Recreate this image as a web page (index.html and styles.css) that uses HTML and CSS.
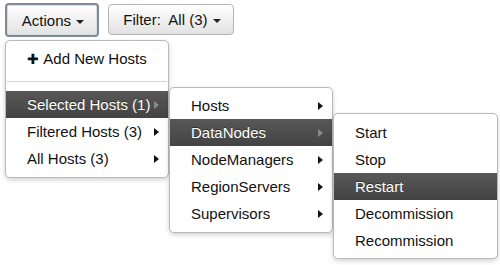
FILE: index.html
```html
<!DOCTYPE html>
<html lang="en">
<head>
  <meta charset="UTF-8">
  <title>Hosts Actions</title>
  <link rel="stylesheet" href="styles.css">
</head>
<body>
  <div class="toolbar">
    <button class="btn btn-actions">Actions <span class="caret"></span></button>
    <button class="btn btn-filter">Filter:&nbsp; All (3) <span class="caret"></span></button>
  </div>

  <ul class="menu menu-main">
    <li class="item"><span class="plus">&#10010;</span> Add New Hosts</li>
    <li class="divider"></li>
    <li class="item sub active">Selected Hosts (1)
      <ul class="menu menu-hosts">
        <li class="item sub">Hosts</li>
        <li class="item sub active">DataNodes
          <ul class="menu menu-ops">
            <li class="item">Start</li>
            <li class="item">Stop</li>
            <li class="item active">Restart</li>
            <li class="item">Decommission</li>
            <li class="item">Recommission</li>
          </ul>
        </li>
        <li class="item sub">NodeManagers</li>
        <li class="item sub">RegionServers</li>
        <li class="item sub">Supervisors</li>
      </ul>
    </li>
    <li class="item sub">Filtered Hosts (3)</li>
    <li class="item sub">All Hosts (3)</li>
  </ul>
</body>
</html>
```

FILE: styles.css
```css
body {
  margin: 0;
  font-family: "Liberation Sans", Arial, sans-serif;
  font-size: 15px;
  color: #111;
  background: #fff;
}
.toolbar {
  display: flex;
  align-items: flex-start;
  gap: 9px;
  padding: 3px 0 0 5px;
}
.btn {
  font-family: inherit;
  font-size: 15px;
  color: #111;
  background: linear-gradient(#ffffff, #e2e2e2);
  border: 1px solid #b4b4b4;
  border-radius: 4px;
  padding: 0;
  box-sizing: border-box;
}
.btn-actions {
  width: 94px;
  height: 34px;
  border: 2px solid #7f8b97;
  box-shadow: inset 0 0 0 1px #d8dde2;
  padding-left: 2px;
}
.btn-filter {
  width: 126px;
  height: 31px;
  margin-top: 1px;
  padding-left: 2px;
}
.caret {
  display: inline-block;
  width: 0;
  height: 0;
  border-top: 4px solid #222;
  border-left: 4px solid transparent;
  border-right: 4px solid transparent;
  vertical-align: middle;
  margin-left: 1px;
}
.menu {
  position: absolute;
  list-style: none;
  margin: 0;
  background: #fff;
  border: 1px solid #b9b9b9;
  border-radius: 5px;
  box-shadow: 0 2px 5px rgba(0, 0, 0, 0.18);
  box-sizing: border-box;
}
.menu-main {
  left: 5px;
  top: 40px;
  width: 164px;
  padding: 4px 0 5px;
}
.menu-hosts {
  left: 163px;
  top: -4px;
  width: 164px;
  padding: 4px 0 5px;
}
.menu-ops {
  left: 163px;
  top: -6px;
  width: 165px;
  padding: 5px 0 4px;
}
.item {
  position: relative;
  height: 27px;
  line-height: 27px;
  padding: 0 0 0 21px;
  white-space: nowrap;
}
.plus {
  font-size: 14px;
  margin-right: 1px;
}
.divider {
  height: 1px;
  margin: 9px 1px;
  background: #d4d4d4;
}
.sub::after {
  content: "";
  position: absolute;
  right: 9px;
  top: 10px;
  border-left: 5px solid #111;
  border-top: 4px solid transparent;
  border-bottom: 4px solid transparent;
}
.active {
  color: #fff;
  background: linear-gradient(#585858, #434343);
  text-shadow: 0 -1px 0 rgba(0, 0, 0, 0.4);
}
.active .item {
  color: #111;
  text-shadow: none;
}
.active .active {
  color: #fff;
  text-shadow: 0 -1px 0 rgba(0, 0, 0, 0.4);
}
.active::after {
  border-left-color: #8a8a8a;
}
.active .item.sub::after {
  border-left-color: #111;
}
.active .item.active::after {
  border-left-color: #8a8a8a;
}
```
